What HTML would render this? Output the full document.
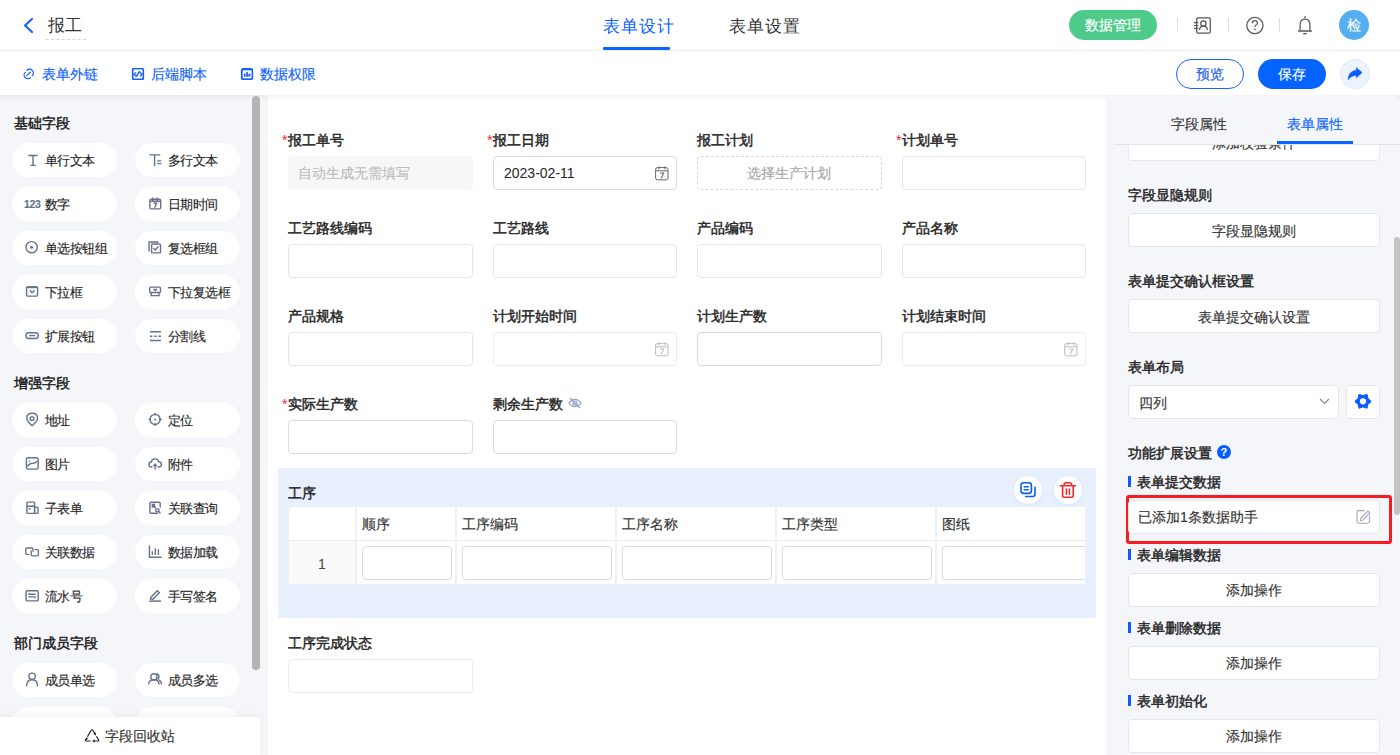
<!DOCTYPE html><html><head><meta charset="utf-8"><style>
*{box-sizing:border-box;margin:0;padding:0}
html,body{width:1400px;height:755px;overflow:hidden;background:#fff;font-family:"Liberation Sans",sans-serif;color:#333;font-size:14px;-webkit-text-stroke-width:0.15px}
.bd{font-weight:normal !important;-webkit-text-stroke-width:0.45px !important}
.abs{position:absolute}
.t{position:absolute;white-space:nowrap;line-height:1}
svg{position:absolute;overflow:visible}
.pill{position:absolute;width:105px;height:34px;border-radius:17px;background:#fff}
.pill .tx{position:absolute;left:33px;top:9px;line-height:1;font-size:13px;color:#222;white-space:nowrap}
.sech{position:absolute;left:14px;font-size:14px;font-weight:normal;-webkit-text-stroke-width:0.45px;color:#1a1a1a;line-height:1;white-space:nowrap}
.lbl{position:absolute;font-size:14px;font-weight:normal;-webkit-text-stroke-width:0.45px;color:#262626;line-height:1;white-space:nowrap}
.lbl i{font-style:normal;color:#f5222d;font-weight:normal;margin-right:1px;-webkit-text-stroke-width:0}
.inp{position:absolute;width:185px;height:34px;border:1px solid #e6e6e6;border-radius:4px;background:#fff}
.rbtn{position:absolute;left:1128px;width:252px;height:34px;border:1px solid #e4e6ea;border-radius:4px;background:#fff}
.rbtn span{position:absolute;left:0;right:0;top:10px;text-align:center;line-height:1;font-size:14px;color:#333;white-space:nowrap}
.rh{position:absolute;left:1128px;font-size:14px;font-weight:normal;-webkit-text-stroke-width:0.45px;color:#262626;line-height:1;white-space:nowrap}
.bar{position:absolute;left:1128px;width:3px;height:11px;background:#0a5cff}
.th{position:absolute;top:507px;height:33px;font-size:14px;color:#333;line-height:1;white-space:nowrap}
</style></head><body>
<div class="abs" style="left:0;top:95px;width:268px;height:660px;background:#f5f6fa"></div>
<div class="abs" style="left:1106px;top:95px;width:294px;height:660px;background:#f5f6fa"></div>
<div class="abs" style="left:0;top:50px;width:1400px;height:1px;background:#ebedf0"></div>
<svg style="left:22px;top:17px" width="12" height="17" viewBox="0 0 12 17"><path d="M10 2 L3 8.5 L10 15" fill="none" stroke="#1664ff" stroke-width="2.2" stroke-linecap="round" stroke-linejoin="round"/></svg>
<div class="t" style="left:48px;top:17px;font-size:17px;color:#333;-webkit-text-stroke-width:0">报工</div>
<div class="abs" style="left:46px;top:39px;width:40px;border-top:1px dashed #d6d6d6"></div>
<div class="t" style="left:603px;top:18px;font-size:17px;letter-spacing:1px;color:#0a64ff;-webkit-text-stroke-width:0">表单设计</div>
<div class="abs" style="left:603px;top:47px;width:67px;height:3px;border-radius:1px;background:#0a64ff"></div>
<div class="t" style="left:729px;top:18px;font-size:17px;letter-spacing:1px;color:#333;-webkit-text-stroke-width:0">表单设置</div>
<div class="abs" style="left:1069px;top:10px;width:88px;height:30px;border-radius:15px;background:#4ecb8b"></div>
<div class="t" style="left:1085px;top:18px;font-size:14px;color:#fff">数据管理</div>
<div class="abs" style="left:1177px;top:18px;width:1px;height:14px;background:#dcdcdc"></div>
<div class="abs" style="left:1228px;top:18px;width:1px;height:14px;background:#dcdcdc"></div>
<div class="abs" style="left:1279px;top:18px;width:1px;height:14px;background:#dcdcdc"></div>
<svg style="left:1185px;top:10px" width="140" height="32" viewBox="1185 10 140 32"><g fill="none" stroke="#555" stroke-width="1.25"><rect x="1196.7" y="17.8" width="13.6" height="15.3" rx="1.4"/><path d="M1194 22.6 H1198.2 M1194 25.5 H1198.2 M1194 28.4 H1198.2" stroke-width="1.1"/><circle cx="1203.4" cy="23.5" r="2.6"/><path d="M1199.4 30 Q1199.9 26.2 1203.4 26.2 Q1206.9 26.2 1207.4 30"/><circle cx="1254.9" cy="25.5" r="8.1"/><path d="M1252.4 23.2 Q1252.4 20.6 1254.9 20.6 Q1257.4 20.6 1257.4 22.9 Q1257.4 24.3 1255.9 25 Q1254.9 25.5 1254.9 27"/><path d="M1305 16.6 V17.9" stroke-linecap="round"/><path d="M1300.1 30.6 V24.8 Q1300.1 19 1305 19 Q1309.9 19 1309.9 24.8 V30.6"/><path d="M1298.6 31 H1311.4" stroke-width="1.4" stroke-linecap="round"/><path d="M1303.6 33.6 H1306.4" stroke-width="1.3" stroke-linecap="round"/></g><circle cx="1254.9" cy="29.3" r="0.85" fill="#555"/></svg>
<div class="abs" style="left:1339px;top:10px;width:30px;height:30px;border-radius:50%;background:#55aef2"></div>
<div class="t" style="left:1347px;top:18px;font-size:14px;color:#fff">检</div>
<svg style="left:0;top:50px" width="300" height="45" viewBox="0 50 300 45"><g fill="none" stroke="#0f5fff" stroke-width="1.2" stroke-linecap="round"><path d="M26.7 75.6 L30.4 72.2 M26.9 70.4 A3.75 3.75 0 1 1 32.2 75.7 M25.2 72.3 A3.7 3.7 0 1 0 30.5 77.6"/></g><g fill="none" stroke="#0f5fff" stroke-width="1.2"><rect x="132.6" y="68.6" width="10.8" height="10.8" rx="1.6"/><path d="M135.6 72.3 L133.6 74.4 L136.2 76.6 L139.3 71.4 L142.2 74.4 L140.3 76.5" stroke-width="1.05" stroke-linejoin="round"/><rect x="241.9" y="69.6" width="10.6" height="9.5" rx="1.8"/><path d="M244.5 74.6 V76.8 M247.2 72.4 V76.8 M249.8 73.6 V76.8" stroke-width="1.2"/></g></svg>
<div class="t" style="left:42px;top:67px;font-size:14px;color:#0f5fff">表单外链</div>
<svg style="left:132px;top:68px" width="12" height="12" viewBox="0 0 12 12"><rect x="0.6" y="0.6" width="10.8" height="10.8" rx="1" fill="none" stroke="#0f5fff" stroke-width="1.4"/><path d="M4 4.5 L2.6 6 L4 7.5 M8 4.5 L9.4 6 L8 7.5 M6.8 3.8 L5.2 8.2" fill="none" stroke="#0f5fff" stroke-width="1"/></svg>
<div class="t" style="left:151px;top:67px;font-size:14px;color:#0f5fff">后端脚本</div>
<svg style="left:241px;top:68px" width="12" height="12" viewBox="0 0 12 12"><rect x="0.6" y="0.6" width="10.8" height="10.8" rx="1.5" fill="none" stroke="#0f5fff" stroke-width="1.4"/><path d="M4 5.5 V8.5 M6 4 V8.5 M8 6 V8.5" stroke="#0f5fff" stroke-width="1.3"/></svg>
<div class="t" style="left:260px;top:67px;font-size:14px;color:#0f5fff">数据权限</div>
<div class="abs" style="left:1176px;top:59px;width:68px;height:30px;border-radius:15px;border:1px solid #1664ff"></div>
<div class="t" style="left:1196px;top:67px;font-size:14px;color:#1a5cf5">预览</div>
<div class="abs" style="left:1258px;top:59px;width:68px;height:30px;border-radius:15px;background:#0564ff"></div>
<div class="t" style="left:1278px;top:67px;font-size:14px;color:#fff">保存</div>
<div class="abs" style="left:1340px;top:59px;width:30px;height:30px;border-radius:50%;background:#eef4ff;border:1px solid #dde8fc"></div>
<svg style="left:1330px;top:55px" width="50" height="40" viewBox="1330 55 50 40"><path d="M1362.2 72.6 L1356.3 67.5 L1356.3 70.2 Q1350.5 70.6 1348.6 76 Q1348.1 77.8 1348.2 79.9 Q1350.8 75.6 1356.3 75.4 L1356.3 78.1 Z" fill="#0a5cff" stroke="#0a5cff" stroke-width="0.4" stroke-linejoin="round"/></svg>
<div class="abs" style="left:0;top:95px;width:1400px;height:6px;background:linear-gradient(rgba(0,0,0,0.045),rgba(0,0,0,0))"></div>
<div class="sech" style="top:116px">基础字段</div>
<div class="pill" style="left:12px;top:143px"></div>
<svg style="left:12px;top:143px" width="34" height="34" viewBox="0 0 34 34"><path d="M16.3 12.5 H25.7 M21 12.5 V22.5 M18.3 22.4 H23.7" fill="none" stroke="#66728b" stroke-width="1.4"/></svg>
<div class="t" style="left:45px;top:154px;font-size:13px;letter-spacing:-0.6px;color:#1f1f1f">单行文本</div>
<div class="pill" style="left:135px;top:143px"></div>
<svg style="left:135px;top:143px" width="34" height="34" viewBox="0 0 34 34"><path d="M14.3 11.9 H25.3 M19.6 11.9 V23 M22.3 17.9 H26.3 M22.3 20.6 H26.3" fill="none" stroke="#66728b" stroke-width="1.4"/></svg>
<div class="t" style="left:168px;top:154px;font-size:13px;letter-spacing:-0.6px;color:#1f1f1f">多行文本</div>
<div class="pill" style="left:12px;top:187px"></div>
<div class="t" style="left:24px;top:198.5px;font-size:10.5px;font-weight:bold;color:#66728b;letter-spacing:-0.4px">123</div>
<div class="t" style="left:45px;top:198px;font-size:13px;letter-spacing:-0.6px;color:#1f1f1f">数字</div>
<div class="pill" style="left:135px;top:187px"></div>
<svg style="left:135px;top:187px" width="34" height="34" viewBox="0 0 34 34"><rect x="14.9" y="12.2" width="10.8" height="9.7" rx="1.3" fill="none" stroke="#66728b" stroke-width="1.4"/><path d="M14.9 14.3 H25.7 M17.8 10.5 V13.5 M22.3 10.5 V13.5 M18.6 16.3 H21.6 L19.6 20.6" fill="none" stroke="#66728b" stroke-width="1.4"/></svg>
<div class="t" style="left:168px;top:198px;font-size:13px;letter-spacing:-0.6px;color:#1f1f1f">日期时间</div>
<div class="pill" style="left:12px;top:231px"></div>
<svg style="left:12px;top:231px" width="34" height="34" viewBox="0 0 34 34"><circle cx="19.6" cy="16.2" r="5.6" fill="none" stroke="#66728b" stroke-width="1.4"/><circle cx="19.6" cy="16.2" r="1.5" fill="#66728b"/></svg>
<div class="t" style="left:45px;top:242px;font-size:13px;letter-spacing:-0.6px;color:#1f1f1f">单选按钮组</div>
<div class="pill" style="left:135px;top:231px"></div>
<svg style="left:135px;top:231px" width="34" height="34" viewBox="0 0 34 34"><path d="M14.1 20.5 V11 H23.5" fill="none" stroke="#66728b" stroke-width="1.4"/><rect x="16.6" y="13" width="8.9" height="8.9" rx="1" fill="none" stroke="#66728b" stroke-width="1.4"/><path d="M18.3 17 L20.3 19 L23.4 15.4" fill="none" stroke="#66728b" stroke-width="1.4"/></svg>
<div class="t" style="left:168px;top:242px;font-size:13px;letter-spacing:-0.6px;color:#1f1f1f">复选框组</div>
<div class="pill" style="left:12px;top:275px"></div>
<svg style="left:12px;top:275px" width="34" height="34" viewBox="0 0 34 34"><rect x="14.6" y="12" width="11" height="9.1" rx="1" fill="none" stroke="#66728b" stroke-width="1.4"/><path d="M14.6 12.3 H25.6" fill="none" stroke="#66728b" stroke-width="1.8"/><path d="M17.9 15.3 L20.1 17.8 L22.6 15.3" fill="none" stroke="#66728b" stroke-width="1.4"/></svg>
<div class="t" style="left:45px;top:286px;font-size:13px;letter-spacing:-0.6px;color:#1f1f1f">下拉框</div>
<div class="pill" style="left:135px;top:275px"></div>
<svg style="left:135px;top:275px" width="34" height="34" viewBox="0 0 34 34"><rect x="14.7" y="12.1" width="10.8" height="5.4" rx="1" fill="none" stroke="#66728b" stroke-width="1.4"/><path d="M16.2 17.5 V20.6 H24 V17.5 M18.5 13.8 L20.3 15.5 L22 13.8" fill="none" stroke="#66728b" stroke-width="1.4"/></svg>
<div class="t" style="left:168px;top:286px;font-size:13px;letter-spacing:-0.6px;color:#1f1f1f">下拉复选框</div>
<div class="pill" style="left:12px;top:319px"></div>
<svg style="left:12px;top:319px" width="34" height="34" viewBox="0 0 34 34"><rect x="13.8" y="13.7" width="12.6" height="5.8" rx="2.9" fill="none" stroke="#66728b" stroke-width="1.4"/><path d="M17.2 16.6 H23" fill="none" stroke="#66728b" stroke-width="1.4"/></svg>
<div class="t" style="left:45px;top:330px;font-size:13px;letter-spacing:-0.6px;color:#1f1f1f">扩展按钮</div>
<div class="pill" style="left:135px;top:319px"></div>
<svg style="left:135px;top:319px" width="34" height="34" viewBox="0 0 34 34"><path d="M14.9 12.7 H25.9 M14.9 21.5 H25.9 M14.9 17.2 H17.4 M19.1 17.2 H21.7 M23.4 17.2 H25.9" fill="none" stroke="#66728b" stroke-width="1.4"/></svg>
<div class="t" style="left:168px;top:330px;font-size:13px;letter-spacing:-0.6px;color:#1f1f1f">分割线</div>
<div class="sech" style="top:376px">增强字段</div>
<div class="pill" style="left:12px;top:403px"></div>
<svg style="left:12px;top:403px" width="34" height="34" viewBox="0 0 34 34"><path d="M20.1 22.8 Q14.7 18 14.7 15.3 Q14.7 10.2 20.1 10.2 Q25.5 10.2 25.5 15.3 Q25.5 18 20.1 22.8 Z" fill="none" stroke="#66728b" stroke-width="1.4"/><circle cx="20" cy="15.5" r="1.9" fill="none" stroke="#66728b" stroke-width="1.4"/></svg>
<div class="t" style="left:45px;top:414px;font-size:13px;letter-spacing:-0.6px;color:#1f1f1f">地址</div>
<div class="pill" style="left:135px;top:403px"></div>
<svg style="left:135px;top:403px" width="34" height="34" viewBox="0 0 34 34"><circle cx="20.1" cy="16.4" r="5" fill="none" stroke="#66728b" stroke-width="1.4"/><circle cx="20.1" cy="16.4" r="1" fill="#66728b"/><path d="M20.1 9.9 V12.6 M20.1 20.2 V22.9 M13.5 16.4 H16.2 M24 16.4 H26.7" fill="none" stroke="#66728b" stroke-width="1.4"/></svg>
<div class="t" style="left:168px;top:414px;font-size:13px;letter-spacing:-0.6px;color:#1f1f1f">定位</div>
<div class="pill" style="left:12px;top:447px"></div>
<svg style="left:12px;top:447px" width="34" height="34" viewBox="0 0 34 34"><rect x="14.4" y="10.8" width="11.7" height="11.3" rx="1.5" fill="none" stroke="#66728b" stroke-width="1.4"/><path d="M15.5 19.5 Q17 16.2 21 16.2 Q23.5 16 25.2 14.2" fill="none" stroke="#66728b" stroke-width="1.4"/><circle cx="17.5" cy="14.3" r="0.8" fill="#66728b"/></svg>
<div class="t" style="left:45px;top:458px;font-size:13px;letter-spacing:-0.6px;color:#1f1f1f">图片</div>
<div class="pill" style="left:135px;top:447px"></div>
<svg style="left:135px;top:447px" width="34" height="34" viewBox="0 0 34 34"><path d="M17.5 20 H16.6 Q14 20 14 17.4 Q14 15.2 16.4 14.8 Q16.9 11.9 20.1 11.9 Q23.2 11.9 23.8 14.8 Q26.4 15.1 26.4 17.4 Q26.4 20 23.8 20 H22.6" fill="none" stroke="#66728b" stroke-width="1.4"/><path d="M20.1 22.6 V17.5 M18.4 19.1 L20.1 17.3 L21.8 19.1" fill="none" stroke="#66728b" stroke-width="1.4"/></svg>
<div class="t" style="left:168px;top:458px;font-size:13px;letter-spacing:-0.6px;color:#1f1f1f">附件</div>
<div class="pill" style="left:12px;top:491px"></div>
<svg style="left:12px;top:491px" width="34" height="34" viewBox="0 0 34 34"><rect x="14.9" y="11.1" width="7.7" height="11.3" rx="1" fill="none" stroke="#66728b" stroke-width="1.4"/><path d="M14.9 15.3 H22.6 M16.3 17.9 H18.8" fill="none" stroke="#66728b" stroke-width="1.4"/><rect x="22.6" y="16.1" width="3.5" height="6.3" rx="0.8" fill="none" stroke="#66728b" stroke-width="1.4"/></svg>
<div class="t" style="left:45px;top:502px;font-size:13px;letter-spacing:-0.6px;color:#1f1f1f">子表单</div>
<div class="pill" style="left:135px;top:491px"></div>
<svg style="left:135px;top:491px" width="34" height="34" viewBox="0 0 34 34"><path d="M23 22.3 H16 Q14.9 22.3 14.9 21.2 V12.3 Q14.9 11.2 16 11.2 H24.1 Q25.2 11.2 25.2 12.3 V16.5" fill="none" stroke="#66728b" stroke-width="1.4"/><rect x="17.3" y="13.4" width="2.3" height="2.5" fill="none" stroke="#66728b" stroke-width="1.4"/><circle cx="22.4" cy="19.2" r="1.6" fill="none" stroke="#66728b" stroke-width="1.4"/><path d="M19.2 16.6 H21 M23.6 20.4 L25.4 22.2" fill="none" stroke="#66728b" stroke-width="1.4"/></svg>
<div class="t" style="left:168px;top:502px;font-size:13px;letter-spacing:-0.6px;color:#1f1f1f">关联查询</div>
<div class="pill" style="left:12px;top:535px"></div>
<svg style="left:12px;top:535px" width="34" height="34" viewBox="0 0 34 34"><path d="M17.3 19.4 H15 Q13.8 19.4 13.8 18.2 V14.2 Q13.8 13 15 13 H19.8 Q21 13 21 14.2 V16.7" fill="none" stroke="#66728b" stroke-width="1.4"/><path d="M19.2 15.4 V19.6 Q19.2 20.9 20.5 20.9 H25.2 Q26.4 20.9 26.4 19.6 V15.9 Q26.4 14.6 25.2 14.6 H22.8" fill="none" stroke="#66728b" stroke-width="1.4"/></svg>
<div class="t" style="left:45px;top:546px;font-size:13px;letter-spacing:-0.6px;color:#1f1f1f">关联数据</div>
<div class="pill" style="left:135px;top:535px"></div>
<svg style="left:135px;top:535px" width="34" height="34" viewBox="0 0 34 34"><path d="M14.4 10.4 V22.3 H26.6 M17.3 16.2 V20 M20.3 13.4 V20 M23.4 14.3 V20" fill="none" stroke="#66728b" stroke-width="1.4"/></svg>
<div class="t" style="left:168px;top:546px;font-size:13px;letter-spacing:-0.6px;color:#1f1f1f">数据加载</div>
<div class="pill" style="left:12px;top:579px"></div>
<svg style="left:12px;top:579px" width="34" height="34" viewBox="0 0 34 34"><rect x="14.1" y="11.7" width="12.1" height="10.2" rx="1" fill="none" stroke="#66728b" stroke-width="1.4"/><path d="M16.5 15.3 H23.7 M16.5 17.9 H23.7 M17.5 14.2 L16.5 15.3 M22.7 19 L23.7 17.9" fill="none" stroke="#66728b" stroke-width="1.4"/></svg>
<div class="t" style="left:45px;top:590px;font-size:13px;letter-spacing:-0.6px;color:#1f1f1f">流水号</div>
<div class="pill" style="left:135px;top:579px"></div>
<svg style="left:135px;top:579px" width="34" height="34" viewBox="0 0 34 34"><path d="M15.5 20.2 L15.8 18.3 L22.3 11.8 L24.3 13.8 L17.8 20.3 Z M14.3 22.3 Q20 21.7 26 22.3" fill="none" stroke="#66728b" stroke-width="1.4"/></svg>
<div class="t" style="left:168px;top:590px;font-size:13px;letter-spacing:-0.6px;color:#1f1f1f">手写签名</div>
<div class="sech" style="top:636px">部门成员字段</div>
<div class="pill" style="left:12px;top:663px"></div>
<svg style="left:12px;top:663px" width="34" height="34" viewBox="0 0 34 34"><circle cx="20.1" cy="13.3" r="3.2" fill="none" stroke="#66728b" stroke-width="1.4"/><path d="M14.6 23.4 Q14.6 16.8 20.1 16.8 Q25.6 16.8 25.6 23.4" fill="none" stroke="#66728b" stroke-width="1.4"/></svg>
<div class="t" style="left:45px;top:674px;font-size:13px;letter-spacing:-0.6px;color:#1f1f1f">成员单选</div>
<div class="pill" style="left:135px;top:663px"></div>
<svg style="left:135px;top:663px" width="34" height="34" viewBox="0 0 34 34"><circle cx="18.9" cy="13.9" r="3.1" fill="none" stroke="#66728b" stroke-width="1.4"/><path d="M13.6 21.6 Q13.6 16.9 18.9 16.9 Q24.1 16.9 24.1 21.6 M21.7 10.8 Q24.5 11.5 23.8 14.8 Q23.5 16.1 22.5 16.6 M24 17.2 Q26.6 18.3 26.6 21.6" fill="none" stroke="#66728b" stroke-width="1.4"/></svg>
<div class="t" style="left:168px;top:674px;font-size:13px;letter-spacing:-0.6px;color:#1f1f1f">成员多选</div>
<div class="pill" style="left:12px;top:707px"></div><div class="pill" style="left:135px;top:707px"></div>
<div class="abs" style="left:252px;top:96px;width:8px;height:574px;border-radius:4px;background:#b4b4b4"></div>
<div class="abs" style="left:0;top:717px;width:260px;height:38px;background:#fff;box-shadow:0 -3px 6px rgba(0,0,0,0.04)"></div>
<svg style="left:80px;top:725px" width="25" height="20" viewBox="80 725 25 20"><g fill="none" stroke="#262626" stroke-width="1.1" stroke-linejoin="round" stroke-linecap="round"><path d="M87.6 736.4 L91.1 730.4 Q92 729 92.9 730.4 L94.6 733.3"/><path d="M96.6 736.6 L98.6 739.9 Q99.2 741 97.9 741 L94.2 741"/><path d="M90.3 741 L86.2 741 Q84.8 741 85.4 739.9 L85.9 739"/></g><path d="M93.2 733.6 L96.1 732.6 L95.7 735.7 Z M94.6 739.2 L92.2 741 L94.6 742.8 Z M85.3 740 L86.3 737.2 L88.5 739.1 Z" fill="#262626"/></svg>
<div class="t" style="left:105px;top:729px;font-size:14px;color:#333">字段回收站</div>
<div class="lbl" style="left:282px;top:133px"><i>*</i>报工单号</div>
<div class="inp" style="left:288px;top:156px;background:#f7f7f7;border-color:#f7f7f7"></div>
<div class="t" style="left:298px;top:166px;font-size:14px;color:#bdbdbd">自动生成无需填写</div>
<div class="lbl" style="left:487px;top:133px"><i>*</i>报工日期</div>
<div class="inp" style="left:493px;top:156px;width:184px;border-color:#dcdcdc"></div>
<div class="t" style="left:504px;top:166px;font-size:14px;color:#262626;-webkit-text-stroke-width:0">2023-02-11</div>
<svg style="left:654px;top:166px" width="16" height="16" viewBox="0 0 16 16"><g fill="none" stroke="#666" stroke-width="1"><rect x="1.6" y="1.6" width="12.4" height="12.2" rx="1.8"/><path d="M1.6 4.8 H14 M4.9 0.4 V3.4 M11 0.4 V3.4" /><path d="M6 7 H9.7 L7.3 12.3" stroke-width="1.05"/></g></svg>
<div class="lbl" style="left:697px;top:133px">报工计划</div>
<div class="inp" style="left:697px;top:156px;border:1px dashed #d9d9d9"></div>
<div class="t" style="left:747px;top:166px;font-size:14px;color:#a6a6a6">选择生产计划</div>
<div class="lbl" style="left:896px;top:133px"><i>*</i>计划单号</div>
<div class="inp" style="left:902px;top:156px;width:184px"></div>
<div class="lbl" style="left:288px;top:221px">工艺路线编码</div>
<div class="inp" style="left:288px;top:244px;width:185px"></div>
<div class="lbl" style="left:493px;top:221px">工艺路线</div>
<div class="inp" style="left:493px;top:244px;width:184px"></div>
<div class="lbl" style="left:697px;top:221px">产品编码</div>
<div class="inp" style="left:697px;top:244px;width:185px"></div>
<div class="lbl" style="left:902px;top:221px">产品名称</div>
<div class="inp" style="left:902px;top:244px;width:184px"></div>
<div class="lbl" style="left:288px;top:309px">产品规格</div>
<div class="lbl" style="left:493px;top:309px">计划开始时间</div>
<div class="lbl" style="left:697px;top:309px">计划生产数</div>
<div class="lbl" style="left:902px;top:309px">计划结束时间</div>
<div class="inp" style="left:288px;top:332px"></div>
<div class="inp" style="left:493px;top:332px;width:184px;border-color:#ececec"></div>
<svg style="left:654px;top:342px" width="16" height="16" viewBox="0 0 16 16"><g fill="none" stroke="#bbb" stroke-width="1"><rect x="1.6" y="1.6" width="12.4" height="12.2" rx="1.8"/><path d="M1.6 4.8 H14 M4.9 0.4 V3.4 M11 0.4 V3.4" /><path d="M6 7 H9.7 L7.3 12.3" stroke-width="1.05"/></g></svg>
<div class="inp" style="left:697px;top:332px;border-color:#d9d9d9"></div>
<div class="inp" style="left:902px;top:332px;width:184px;border-color:#ececec"></div>
<svg style="left:1063px;top:342px" width="16" height="16" viewBox="0 0 16 16"><g fill="none" stroke="#bbb" stroke-width="1"><rect x="1.6" y="1.6" width="12.4" height="12.2" rx="1.8"/><path d="M1.6 4.8 H14 M4.9 0.4 V3.4 M11 0.4 V3.4" /><path d="M6 7 H9.7 L7.3 12.3" stroke-width="1.05"/></g></svg>
<div class="lbl" style="left:282px;top:397px"><i>*</i>实际生产数</div>
<div class="inp" style="left:288px;top:420px;border-color:#dcdcdc"></div>
<div class="lbl" style="left:493px;top:397px">剩余生产数</div>
<div class="inp" style="left:493px;top:420px;width:184px;border-color:#dcdcdc"></div>
<svg style="left:568px;top:397px" width="14" height="12" viewBox="0 0 14 12"><path d="M0.8 6 Q7 -1.5 13.2 6 Q7 13.5 0.8 6 Z" fill="none" stroke="#8e9dbd" stroke-width="1.1"/><circle cx="7" cy="6" r="2" fill="none" stroke="#8e9dbd" stroke-width="1.1"/><path d="M2 1 L12 11" stroke="#8e9dbd" stroke-width="1.1"/></svg>
<div class="abs" style="left:278px;top:468px;width:818px;height:150px;background:#e8f0fe"></div>
<div class="lbl" style="left:288px;top:486px">工序</div>
<div class="abs" style="left:1014px;top:476px;width:28px;height:28px;border-radius:50%;background:#fff;box-shadow:0 1px 4px rgba(30,90,220,0.08)"></div>
<svg style="left:1010px;top:472px" width="80" height="36" viewBox="1010 472 80 36"><rect x="1021" y="482.8" width="10.4" height="10.6" rx="2.6" fill="none" stroke="#0a5cff" stroke-width="1.6"/><path d="M1024.3 486.7 H1028.2 M1024.3 489.7 H1028.2" stroke="#0a5cff" stroke-width="1.6" stroke-linecap="round"/><path d="M1035 487.2 V494.3 Q1035 496.5 1032.8 496.5 H1025.8" fill="none" stroke="#0a5cff" stroke-width="1.6" stroke-linecap="round"/></svg>
<div class="abs" style="left:1054px;top:476px;width:28px;height:28px;border-radius:50%;background:#fff;box-shadow:0 1px 4px rgba(30,90,220,0.08)"></div>
<svg style="left:1010px;top:472px" width="80" height="36" viewBox="1010 472 80 36"><path d="M1060.3 485.7 H1075.5 M1064.2 485.5 V484.5 Q1064.2 482.8 1066 482.8 H1069.8 Q1071.6 482.8 1071.6 484.5 V485.5 M1062.6 486 V496 Q1062.6 497.3 1063.9 497.3 H1071.9 Q1073.2 497.3 1073.2 496 V486 M1066.4 489 V494.3 M1069.4 489 V494.3" fill="none" stroke="#f5262d" stroke-width="1.6" stroke-linecap="round"/></svg>
<div class="abs" style="left:289px;top:507px;width:796px;height:77px;background:#fff;overflow:hidden;border-radius:4px 0 0 4px">
<div class="abs" style="left:0;top:33px;width:796px;height:1px;background:#ececec"></div>
<div class="abs" style="left:0;top:34px;width:67px;height:43px;background:#fafafa"></div>
<div class="abs" style="left:66px;top:0;width:2px;height:77px;background:#eff0f2"></div>
<div class="abs" style="left:166px;top:0;width:2px;height:77px;background:#eff0f2"></div>
<div class="abs" style="left:326px;top:0;width:2px;height:77px;background:#eff0f2"></div>
<div class="abs" style="left:486px;top:0;width:2px;height:77px;background:#eff0f2"></div>
<div class="abs" style="left:646px;top:0;width:2px;height:77px;background:#eff0f2"></div>
</div>
<div class="t" style="left:362px;top:517px;font-size:14px;color:#333">顺序</div>
<div class="t" style="left:462px;top:517px;font-size:14px;color:#333">工序编码</div>
<div class="t" style="left:622px;top:517px;font-size:14px;color:#333">工序名称</div>
<div class="t" style="left:782px;top:517px;font-size:14px;color:#333">工序类型</div>
<div class="t" style="left:942px;top:517px;font-size:14px;color:#333">图纸</div>
<div class="t" style="left:318px;top:557px;font-size:14px;color:#444;-webkit-text-stroke-width:0">1</div>
<div class="abs" style="left:1085px;top:540px;width:1px;height:0"></div>
<div class="inp" style="left:362px;top:546px;width:90px;border-color:#dcdcdc"></div>
<div class="inp" style="left:462px;top:546px;width:150px;border-color:#dcdcdc"></div>
<div class="inp" style="left:622px;top:546px;width:150px;border-color:#dcdcdc"></div>
<div class="inp" style="left:782px;top:546px;width:150px;border-color:#dcdcdc"></div>
<div class="inp" style="left:942px;top:546px;width:143px;border-color:#dcdcdc;border-right:none;border-radius:4px 0 0 4px"></div>
<div class="lbl" style="left:288px;top:636px">工序完成状态</div>
<div class="inp" style="left:288px;top:659px;border-color:#ececec"></div>
<div class="abs" style="left:1114px;top:144px;width:286px;height:1px;background:#e2e4e8"></div>
<div class="rbtn" style="top:127px;height:34px"><span style="top:8px">添加校验条件</span></div>
<div class="abs" style="left:1106px;top:95px;width:288px;height:49px;background:#f5f6fa"></div>
<div class="abs" style="left:1114px;top:144px;width:280px;height:1px;background:#e2e4e8"></div>
<div class="t" style="left:1171px;top:117px;font-size:14px;color:#333">字段属性</div>
<div class="t" style="left:1287px;top:117px;font-size:14px;color:#0a64ff">表单属性</div>
<div class="abs" style="left:1277px;top:141px;width:76px;height:3px;background:#0a64ff"></div>
<div class="rh" style="top:188px">字段显隐规则</div>
<div class="rbtn" style="top:213px"><span>字段显隐规则</span></div>
<div class="rh" style="top:274px">表单提交确认框设置</div>
<div class="rbtn" style="top:299px"><span>表单提交确认设置</span></div>
<div class="rh" style="top:360px">表单布局</div>
<div class="rbtn" style="top:385px;width:211px"><span style="left:10px;text-align:left">四列</span></div>
<svg style="left:1319px;top:398px" width="11" height="7" viewBox="0 0 11 7"><path d="M1 1 L5.5 5.5 L10 1" fill="none" stroke="#888" stroke-width="1.2"/></svg>
<div class="rbtn" style="top:385px;left:1346px;width:34px"></div>
<svg style="left:1340px;top:380px" width="50" height="45" viewBox="1340 380 50 45"><path d="M1370.20 401.30 L1367.33 403.80 L1366.60 407.54 L1363.00 406.30 L1359.40 407.54 L1358.67 403.80 L1355.80 401.30 L1358.67 398.80 L1359.40 395.06 L1363.00 396.30 L1366.60 395.06 L1367.33 398.80 Z" fill="#0a5cff" stroke="#0a5cff" stroke-width="2.2" stroke-linejoin="round"/><circle cx="1363" cy="401.3" r="3.1" fill="#fff"/></svg>
<div class="rh" style="top:446px">功能扩展设置</div>
<div class="abs" style="left:1217px;top:445px;width:14px;height:14px;border-radius:50%;background:#0a5cff"></div>
<div class="t" style="left:1220.5px;top:447px;font-size:11px;font-weight:bold;color:#fff;-webkit-text-stroke-width:0">?</div>
<div class="bar" style="top:476px"></div><div class="rh" style="left:1137px;top:475px">表单提交数据</div>
<div class="abs" style="left:1126px;top:495px;width:266px;height:49px;border:3px solid #f71c1f;border-radius:3px"></div>
<div class="rbtn" style="top:500px"><span style="left:9px;top:9px;text-align:left">已添加1条数据助手</span></div>
<svg style="left:1348px;top:502px" width="30" height="30" viewBox="1348 502 30 30"><g fill="none" stroke="#a3aabb" stroke-width="1.1"><path d="M1364.8 510.6 H1358.6 Q1357 510.6 1357 512.2 V521.6 Q1357 523.2 1358.6 523.2 H1367.8 Q1369.4 523.2 1369.4 521.6 V515.2"/><path d="M1360.3 520.6 L1360.6 518.3 L1367.9 511 L1369.8 512.9 L1362.5 520.2 Z"/></g></svg>
<div class="bar" style="top:549px"></div><div class="rh" style="left:1137px;top:548px">表单编辑数据</div>
<div class="rbtn" style="top:573px"><span style="top:9px">添加操作</span></div>
<div class="bar" style="top:622px"></div><div class="rh" style="left:1137px;top:621px">表单删除数据</div>
<div class="rbtn" style="top:646px"><span style="top:9px">添加操作</span></div>
<div class="bar" style="top:695px"></div><div class="rh" style="left:1137px;top:694px">表单初始化</div>
<div class="rbtn" style="top:719px"><span style="top:9px">添加操作</span></div>
<div class="abs" style="left:1394px;top:237px;width:6px;height:278px;border-radius:3px;background:#c4c4c4"></div>
</body></html>
